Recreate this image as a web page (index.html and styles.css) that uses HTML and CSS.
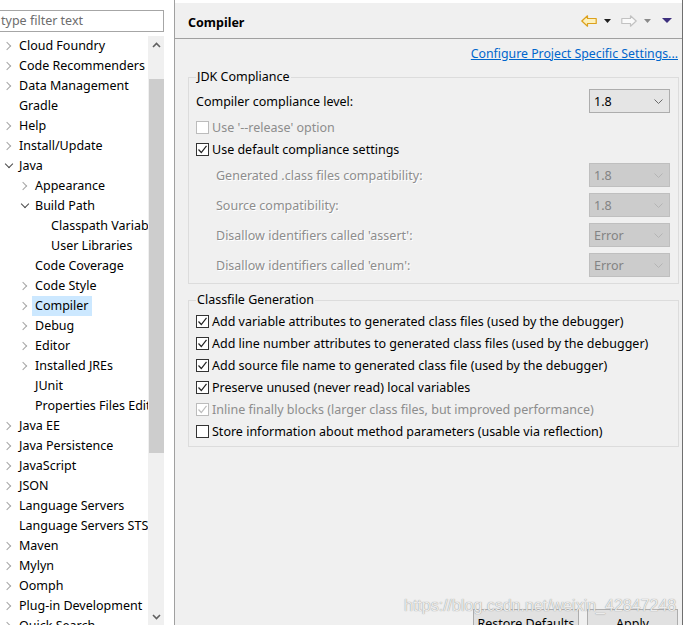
FILE: index.html
```html
<!DOCTYPE html>
<html lang="en">
<head>
<meta charset="utf-8">
<title>Preferences - Compiler</title>
<link rel="stylesheet" href="styles.css">
</head>
<body>
<div class="window">
  <aside class="nav">
    <div class="filter">type filter text</div>
    <div class="tree-wrap">
      <ul class="tree">
        <li class="row l0"><span class="tw c"></span><span class="lbl">Cloud Foundry</span></li>
        <li class="row l0"><span class="tw c"></span><span class="lbl">Code Recommenders</span></li>
        <li class="row l0"><span class="tw c"></span><span class="lbl">Data Management</span></li>
        <li class="row l0"><span class="tw"></span><span class="lbl">Gradle</span></li>
        <li class="row l0"><span class="tw c"></span><span class="lbl">Help</span></li>
        <li class="row l0"><span class="tw c"></span><span class="lbl">Install/Update</span></li>
        <li class="row l0"><span class="tw e"></span><span class="lbl">Java</span></li>
        <li class="row l1"><span class="tw c"></span><span class="lbl">Appearance</span></li>
        <li class="row l1"><span class="tw e"></span><span class="lbl">Build Path</span></li>
        <li class="row l2"><span class="tw"></span><span class="lbl">Classpath Variables</span></li>
        <li class="row l2"><span class="tw"></span><span class="lbl">User Libraries</span></li>
        <li class="row l1"><span class="tw"></span><span class="lbl">Code Coverage</span></li>
        <li class="row l1"><span class="tw c"></span><span class="lbl">Code Style</span></li>
        <li class="row l1"><span class="tw c"></span><span class="lbl sel">Compiler</span></li>
        <li class="row l1"><span class="tw c"></span><span class="lbl">Debug</span></li>
        <li class="row l1"><span class="tw c"></span><span class="lbl">Editor</span></li>
        <li class="row l1"><span class="tw c"></span><span class="lbl">Installed JREs</span></li>
        <li class="row l1"><span class="tw"></span><span class="lbl">JUnit</span></li>
        <li class="row l1"><span class="tw"></span><span class="lbl">Properties Files Editor</span></li>
        <li class="row l0"><span class="tw c"></span><span class="lbl">Java EE</span></li>
        <li class="row l0"><span class="tw c"></span><span class="lbl">Java Persistence</span></li>
        <li class="row l0"><span class="tw c"></span><span class="lbl">JavaScript</span></li>
        <li class="row l0"><span class="tw c"></span><span class="lbl">JSON</span></li>
        <li class="row l0"><span class="tw c"></span><span class="lbl">Language Servers</span></li>
        <li class="row l0"><span class="tw"></span><span class="lbl">Language Servers STS</span></li>
        <li class="row l0"><span class="tw c"></span><span class="lbl">Maven</span></li>
        <li class="row l0"><span class="tw c"></span><span class="lbl">Mylyn</span></li>
        <li class="row l0"><span class="tw c"></span><span class="lbl">Oomph</span></li>
        <li class="row l0"><span class="tw c"></span><span class="lbl">Plug-in Development</span></li>
        <li class="row l0"><span class="tw c"></span><span class="lbl">Quick Search</span></li>
      </ul>
      <div class="vscroll">
        <span class="sb-btn"><svg width="9" height="6" viewBox="0 0 9 6"><path d="M1 5 L4.5 1.5 L8 5" fill="none" stroke="#606060" stroke-width="1.6"/></svg></span>
        <div class="thumb"></div>
        <div class="sb-fill"></div>
        <span class="sb-btn"><svg width="9" height="6" viewBox="0 0 9 6"><path d="M1 1 L4.5 4.5 L8 1" fill="none" stroke="#606060" stroke-width="1.6"/></svg></span>
      </div>
    </div>
  </aside>

  <main class="page">
    <header class="page-head">
      <h1 class="title">Compiler</h1>
      <div class="tools">
        <svg class="t-back" width="16" height="12" viewBox="0 0 16 12"><path d="M0.8 6 L6.5 0.8 V3.5 H15.2 V8.5 H6.5 V11.2 Z" fill="#fdf1bd" stroke="#dca11c" stroke-width="1.2" stroke-linejoin="round"/></svg>
        <svg class="t-tri" width="7" height="4" viewBox="0 0 7 4"><path d="M0 0 H7 L3.5 4 Z" fill="#1e1e1e"/></svg>
        <svg class="t-fwd" width="16" height="12" viewBox="0 0 16 12"><path d="M15.2 6 L9.5 0.8 V3.5 H0.8 V8.5 H9.5 V11.2 Z" fill="#fafafa" stroke="#c2c2c2" stroke-width="1.2" stroke-linejoin="round"/></svg>
        <svg class="t-tri2" width="7" height="4" viewBox="0 0 7 4"><path d="M0 0 H7 L3.5 4 Z" fill="#8a8a8a"/></svg>
        <svg class="t-menu" width="10" height="5" viewBox="0 0 10 5"><path d="M0 0 H10 L5 5 Z" fill="#3d2f7e"/></svg>
      </div>
    </header>

    <div class="page-body">
      <div class="link-row"><a class="link" href="#">Configure Project Specific Settings...</a></div>

      <fieldset class="group jdk">
        <legend>JDK Compliance</legend>
        <div class="field first">
          <span class="flabel">Compiler compliance level:</span>
          <span class="combo"><span class="val">1.8</span><svg width="9" height="5" viewBox="0 0 9 5"><path d="M0.5 0.5 L4.5 4.5 L8.5 0.5" fill="none" stroke="#6a6a6a"/></svg></span>
        </div>
        <label class="check dis gap"><span class="box"></span>Use '--release' option</label>
        <label class="check"><span class="box"><svg width="11" height="11" viewBox="0 0 11 11"><path d="M1.5 5.5 L4.3 8.5 L9.5 1.8" fill="none" stroke="#222" stroke-width="1.2"/></svg></span>Use default compliance settings</label>
        <div class="field sub dis gap">
          <span class="flabel">Generated .class files compatibility:</span>
          <span class="combo"><span class="val">1.8</span><svg width="9" height="5" viewBox="0 0 9 5"><path d="M0.5 0.5 L4.5 4.5 L8.5 0.5" fill="none" stroke="#b4b4b4"/></svg></span>
        </div>
        <div class="field sub dis">
          <span class="flabel">Source compatibility:</span>
          <span class="combo"><span class="val">1.8</span><svg width="9" height="5" viewBox="0 0 9 5"><path d="M0.5 0.5 L4.5 4.5 L8.5 0.5" fill="none" stroke="#b4b4b4"/></svg></span>
        </div>
        <div class="field sub dis">
          <span class="flabel">Disallow identifiers called 'assert':</span>
          <span class="combo"><span class="val">Error</span><svg width="9" height="5" viewBox="0 0 9 5"><path d="M0.5 0.5 L4.5 4.5 L8.5 0.5" fill="none" stroke="#b4b4b4"/></svg></span>
        </div>
        <div class="field sub dis">
          <span class="flabel">Disallow identifiers called 'enum':</span>
          <span class="combo"><span class="val">Error</span><svg width="9" height="5" viewBox="0 0 9 5"><path d="M0.5 0.5 L4.5 4.5 L8.5 0.5" fill="none" stroke="#b4b4b4"/></svg></span>
        </div>
      </fieldset>

      <fieldset class="group classfile">
        <legend>Classfile Generation</legend>
        <label class="check"><span class="box"><svg width="11" height="11" viewBox="0 0 11 11"><path d="M1.5 5.5 L4.3 8.5 L9.5 1.8" fill="none" stroke="#222" stroke-width="1.2"/></svg></span>Add variable attributes to generated class files (used by the debugger)</label>
        <label class="check"><span class="box"><svg width="11" height="11" viewBox="0 0 11 11"><path d="M1.5 5.5 L4.3 8.5 L9.5 1.8" fill="none" stroke="#222" stroke-width="1.2"/></svg></span>Add line number attributes to generated class files (used by the debugger)</label>
        <label class="check"><span class="box"><svg width="11" height="11" viewBox="0 0 11 11"><path d="M1.5 5.5 L4.3 8.5 L9.5 1.8" fill="none" stroke="#222" stroke-width="1.2"/></svg></span>Add source file name to generated class file (used by the debugger)</label>
        <label class="check"><span class="box"><svg width="11" height="11" viewBox="0 0 11 11"><path d="M1.5 5.5 L4.3 8.5 L9.5 1.8" fill="none" stroke="#222" stroke-width="1.2"/></svg></span>Preserve unused (never read) local variables</label>
        <label class="check dis"><span class="box"><svg width="11" height="11" viewBox="0 0 11 11"><path d="M1.5 5.5 L4.3 8.5 L9.5 1.8" fill="none" stroke="#bdbdbd" stroke-width="1.2"/></svg></span>Inline finally blocks (larger class files, but improved performance)</label>
        <label class="check"><span class="box"></span>Store information about method parameters (usable via reflection)</label>
      </fieldset>

      <div class="buttons">
        <button class="btn restore" type="button">Restore Defaults</button>
        <button class="btn apply" type="button">Apply</button>
      </div>
    </div>
  </main>
  <div class="edge"></div>
  <div class="watermark">https://blog.csdn.net/weixin_42847248</div>
</div>
</body>
</html>
```

FILE: styles.css
```css
* { box-sizing: border-box; }

html, body {
  margin: 0;
  padding: 0;
  background: #ffffff;
}

body {
  font-family: "Noto Sans", "Open Sans", "Liberation Sans", sans-serif;
  font-size: 12.5px;
  color: #000;
}

.window {
  position: relative;
  display: flex;
  width: 685px;
  height: 625px;
  overflow: hidden;
  background: #ffffff;
}

/* ---------- left navigation ---------- */
.nav {
  width: 175px;
  flex: none;
  display: flex;
  flex-direction: column;
  padding-right: 10px;
  border-right: 1px solid #a0a0a0;
  background: #fff;
}

.filter {
  margin-top: 10px;
  height: 22px;
  width: 164px;
  border: 1px solid #a6a6a6;
  border-left: none;
  padding-left: 1px;
  line-height: 19px;
  color: #6d6d6d;
  white-space: nowrap;
}

.tree-wrap {
  display: flex;
  flex: 1;
  min-height: 0;
  margin-top: 4px;
}

.tree {
  list-style: none;
  margin: 0;
  padding: 0;
  width: 148px;
  flex: none;
  overflow: hidden;
}

.row {
  display: flex;
  align-items: center;
  height: 20px;
  white-space: nowrap;
}

.row.l1 { padding-left: 16px; }
.row.l2 { padding-left: 32px; }

.tw {
  width: 16px;
  height: 20px;
  flex: none;
  position: relative;
}

.tw.c::before {
  content: "";
  position: absolute;
  left: 4px;
  top: 7px;
  width: 5px;
  height: 5px;
  border-right: 1.5px solid #a6a6a6;
  border-top: 1.5px solid #a6a6a6;
  transform: rotate(45deg);
}

.tw.e::before {
  content: "";
  position: absolute;
  left: 6px;
  top: 5px;
  width: 5px;
  height: 5px;
  border-right: 1.5px solid #4a4a4a;
  border-bottom: 1.5px solid #4a4a4a;
  transform: rotate(45deg);
}

.lbl {
  padding: 0 3px;
  height: 20px;
  line-height: 20px;
}

.lbl.sel { background: #cce8ff; }

.vscroll {
  width: 16px;
  flex: none;
  display: flex;
  flex-direction: column;
  align-items: center;
  background: #f0f0f0;
}

.sb-btn {
  height: 17px;
  width: 16px;
  display: flex;
  align-items: center;
  justify-content: center;
  flex: none;
}

.thumb {
  margin-top: 26px;
  width: 15px;
  height: 374px;
  flex: none;
  background: #cdcdcd;
}

.sb-fill { flex: 1; }

/* ---------- right page ---------- */
.page {
  width: 507px;
  flex: none;
  margin-top: 3px;
  background: #f0f0f0;
  display: flex;
  flex-direction: column;
}

.edge {
  width: 1px;
  flex: none;
  background: #6f6f6f;
}

.page-head {
  height: 36px;
  flex: none;
  display: flex;
  align-items: center;
  justify-content: space-between;
  padding: 2px 10px 0 13px;
  border-bottom: 1px solid #a0a0a0;
}

.title {
  margin: 0;
  font-size: 12.5px;
  font-weight: bold;
  margin-top: 2px;
}

.tools {
  display: flex;
  align-items: center;
  margin-bottom: 2px;
}

.t-tri { margin-left: 7px; }
.t-fwd { margin-left: 10px; }
.t-tri2 { margin-left: 7px; }
.t-menu { margin-left: 11px; }

.page-body {
  display: flex;
  flex-direction: column;
  padding: 0 3px 0 13px;
}

.link-row {
  margin-top: 7px;
  height: 16px;
  display: flex;
  justify-content: flex-end;
  padding-right: 1px;
  line-height: 16px;
}

.link {
  color: #0066cc;
  text-decoration: underline;
  font-size: 12.3px;
}

.group {
  margin: 0;
  border: 1px solid #dcdcdc;
  padding: 0 8px 0 7px;
  min-width: 0;
}

.group legend {
  padding: 0 1px;
  line-height: 16px;
  height: 16px;
}

.jdk {
  margin-top: 7px;
  padding-top: 4px;
  padding-bottom: 6px;
}

.classfile {
  margin-top: 8px;
  padding-top: 2px;
  padding-bottom: 4px;
}

.field {
  display: flex;
  align-items: center;
  justify-content: space-between;
  height: 24px;
}

.field.sub { padding-left: 20px; margin-top: 6px; }
.field.gap { margin-top: 3px; }

.combo {
  width: 81px;
  height: 24px;
  display: flex;
  align-items: center;
  justify-content: space-between;
  padding: 0 6px 0 4px;
  background: #e5e5e5;
  border: 1px solid #adadad;
}

.dis .combo {
  background: #cccccc;
  border-color: #bfbfbf;
  color: #838383;
}

.dis .flabel {
  color: #8d8d8d;
  text-shadow: 1px 1px 0 #ffffff;
}

.check {
  display: flex;
  align-items: center;
  height: 22px;
  white-space: nowrap;
}

.check.gap { margin-top: 3px; }

.box {
  width: 13px;
  height: 13px;
  flex: none;
  margin-right: 3px;
  border: 1px solid #333333;
  background: #ffffff;
  display: flex;
  align-items: center;
  justify-content: center;
}

.check.dis { color: #8d8d8d; }
.check.dis .box { border-color: #bcbcbc; }

.buttons {
  margin-top: 162px;
  display: flex;
  justify-content: flex-end;
  gap: 8px;
  padding-right: 1px;
}

.btn {
  height: 30px;
  border: 1px solid #adadad;
  background: #e1e1e1;
  font: inherit;
  color: #000;
  padding: 0;
  line-height: 28px;
}

.btn.restore { width: 106px; }
.btn.apply { width: 91px; }

.watermark {
  position: absolute;
  left: 404px;
  top: 597px;
  font-family: "Liberation Sans", Arial, sans-serif;
  font-size: 16px;
  color: #ececec;
  text-shadow: 0 0 1px #7a7a7a;
  white-space: nowrap;
  pointer-events: none;
}
```
